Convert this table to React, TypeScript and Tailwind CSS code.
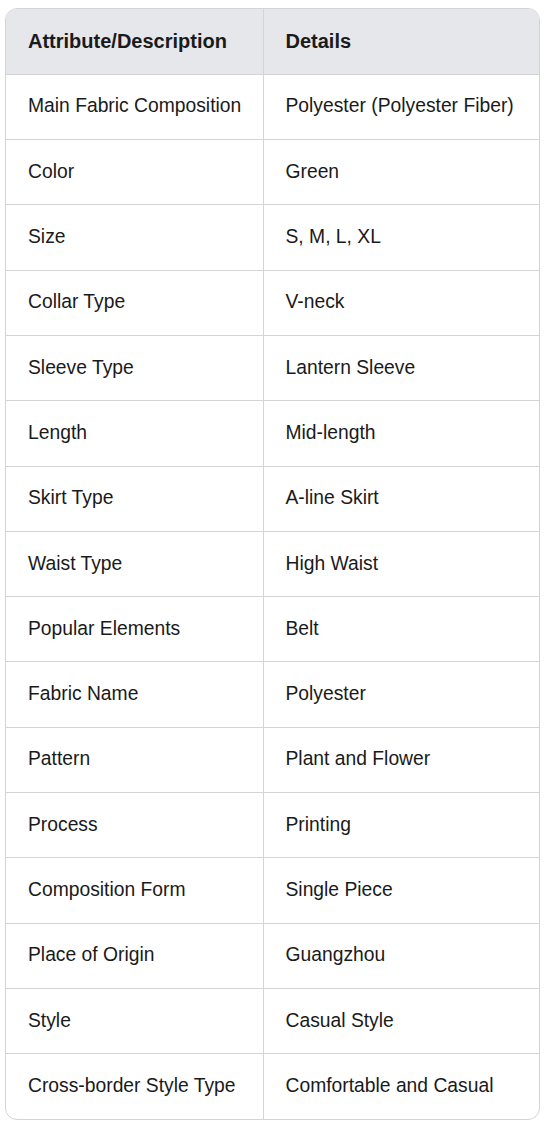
const rows: [string, string][] = [
  ["Main Fabric Composition", "Polyester (Polyester Fiber)"],
  ["Color", "Green"],
  ["Size", "S, M, L, XL"],
  ["Collar Type", "V-neck"],
  ["Sleeve Type", "Lantern Sleeve"],
  ["Length", "Mid-length"],
  ["Skirt Type", "A-line Skirt"],
  ["Waist Type", "High Waist"],
  ["Popular Elements", "Belt"],
  ["Fabric Name", "Polyester"],
  ["Pattern", "Plant and Flower"],
  ["Process", "Printing"],
  ["Composition Form", "Single Piece"],
  ["Place of Origin", "Guangzhou"],
  ["Style", "Casual Style"],
  ["Cross-border Style Type", "Comfortable and Casual"],
];

export default function App() {
  return (
    <div className="min-h-screen bg-white pt-2 pl-[5px] font-['Liberation_Sans',Arial,sans-serif] text-[#1a1a1a]">
      <div className="w-[535px] overflow-hidden rounded-xl border border-[#d4d4d8]">
        <table className="w-full table-fixed border-collapse whitespace-nowrap text-[19.3px]">
          <colgroup>
            <col className="w-[257px]" />
            <col />
          </colgroup>
          <thead>
            <tr className="h-[65.3px] bg-[#e5e7eb] text-[20px]">
              <th className="border-r border-[#d4d4d8] pl-[22px] pr-2 text-left font-bold">Attribute/Description</th>
              <th className="pl-[22px] pr-2 text-left font-bold">Details</th>
            </tr>
          </thead>
          <tbody>
            {rows.map(([k, v]) => (
              <tr key={k} className="h-[65.3px] border-t border-[#d4d4d8]">
                <td className="border-r border-[#d4d4d8] pl-[22px] pr-2">{k}</td>
                <td className="pl-[22px] pr-2">{v}</td>
              </tr>
            ))}
          </tbody>
        </table>
      </div>
    </div>
  );
}
